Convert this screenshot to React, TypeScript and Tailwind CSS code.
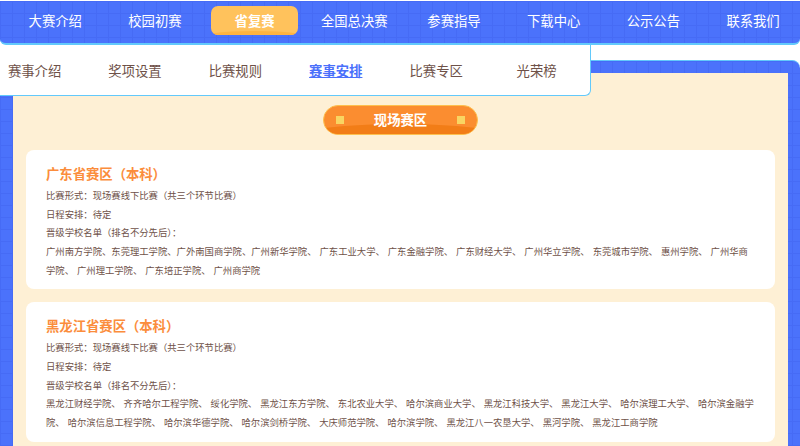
const navItems = ['大赛介绍', '校园初赛', '省复赛', '全国总决赛', '参赛指导', '下载中心', '公示公告', '联系我们']
const subItems = ['赛事介绍', '奖项设置', '比赛规则', '赛事安排', '比赛专区', '光荣榜']

const regions = [
  {
    title: '广东省赛区（本科）',
    schools:
      '广州南方学院、东莞理工学院、广外南国商学院、广州新华学院、 广东工业大学、 广东金融学院、 广东财经大学、 广州华立学院、 东莞城市学院、 惠州学院、 广州华商学院、 广州理工学院、 广东培正学院、 广州商学院',
  },
  {
    title: '黑龙江省赛区（本科）',
    schools:
      '黑龙江财经学院、 齐齐哈尔工程学院、 绥化学院、 黑龙江东方学院、 东北农业大学、 哈尔滨商业大学、 黑龙江科技大学、 黑龙江大学、 哈尔滨理工大学、 哈尔滨金融学院、 哈尔滨信息工程学院、 哈尔滨华德学院、 哈尔滨剑桥学院、 大庆师范学院、 哈尔滨学院、 黑龙江八一农垦大学、 黑河学院、 黑龙江工商学院',
  },
]

const grid =
  'bg-[#4b72fb] bg-[linear-gradient(#466bf5_1px,transparent_1px),linear-gradient(90deg,#466bf5_1px,transparent_1px)] bg-[size:12px_12px]'

function RegionCard({ title, schools }: { title: string; schools: string }) {
  return (
    <div className="rounded-[8px] bg-white px-5 pt-[11px] pb-[10px] text-[9.33px] leading-[18.67px] text-[#6e5148]">
      <h2 className="text-[13.33px] leading-[25px] font-bold text-[#fb8d3c]">{title}</h2>
      <p>比赛形式：现场赛线下比赛（共三个环节比赛）</p>
      <p>日程安排：待定</p>
      <p>晋级学校名单（排名不分先后）：</p>
      <p className="[word-spacing:0.9px]">{schools}</p>
    </div>
  )
}

export default function App() {
  return (
    <div className="h-[446px] w-[800px] overflow-hidden bg-white font-['Noto_Sans_CJK_SC','Noto_Sans',sans-serif]">
      <nav className={`mt-px flex h-[44px] items-center rounded-b-[6px] border-b-2 border-[#62c9fb] pb-[3px] pl-[5.4px] ${grid}`}>
        {navItems.map((item) => (
          <a
            key={item}
            className={`flex h-[29px] shrink-0 items-center justify-center text-[13.33px] text-white ${
              item === '省复赛'
                ? 'relative mx-[6px] w-[87.7px] overflow-hidden rounded-[7px] bg-[#ffc25c] font-bold'
                : 'w-[99.7px]'
            }`}
          >
            {item === '省复赛' && (
              <span className="absolute -inset-x-4 -bottom-[12px] h-[16px] rounded-[50%] bg-[#ffb340]" />
            )}
            <span className="relative">{item}</span>
          </a>
        ))}
      </nav>

      <div className="relative z-10 flex h-[51px] w-[591px] items-center rounded-br-[6px] border-r border-b border-[#62c9fb] bg-white pt-px">
        <div className="-ml-[15.6px] flex">
          {subItems.map((item) => (
            <a
              key={item}
              className={`w-[100.4px] text-center text-[13.33px] ${
                item === '赛事安排' ? 'font-bold text-[#4a70fb] underline' : 'text-[#6e5148]'
              }`}
            >
              {item}
            </a>
          ))}
        </div>
      </div>

      <main className={`-mt-[36px] h-[400px] rounded-tr-[8px] border-t border-[#62c9fb] pt-[12px] ${grid}`}>
        <div className="ml-[13px] h-[400px] w-[775px] bg-[#fef0d5] px-[13px] pt-[32px]">
          <div className="relative mx-auto flex h-[30px] w-[155px] items-center justify-between overflow-hidden rounded-full border border-[#fdc04e] bg-[#fb8d30] px-[12px]">
            <span className="absolute -inset-x-6 -bottom-[14px] h-[24px] rounded-[50%] bg-[#f27d17]" />
            <span className="relative size-[8px] bg-[#f9d562]" />
            <span className="relative text-[13.33px] font-bold text-white">现场赛区</span>
            <span className="relative size-[8px] bg-[#f9d562]" />
          </div>
          <div className="mt-[15px] flex flex-col gap-[13px]">
            {regions.map((region) => (
              <RegionCard key={region.title} {...region} />
            ))}
          </div>
        </div>
      </main>
    </div>
  )
}
